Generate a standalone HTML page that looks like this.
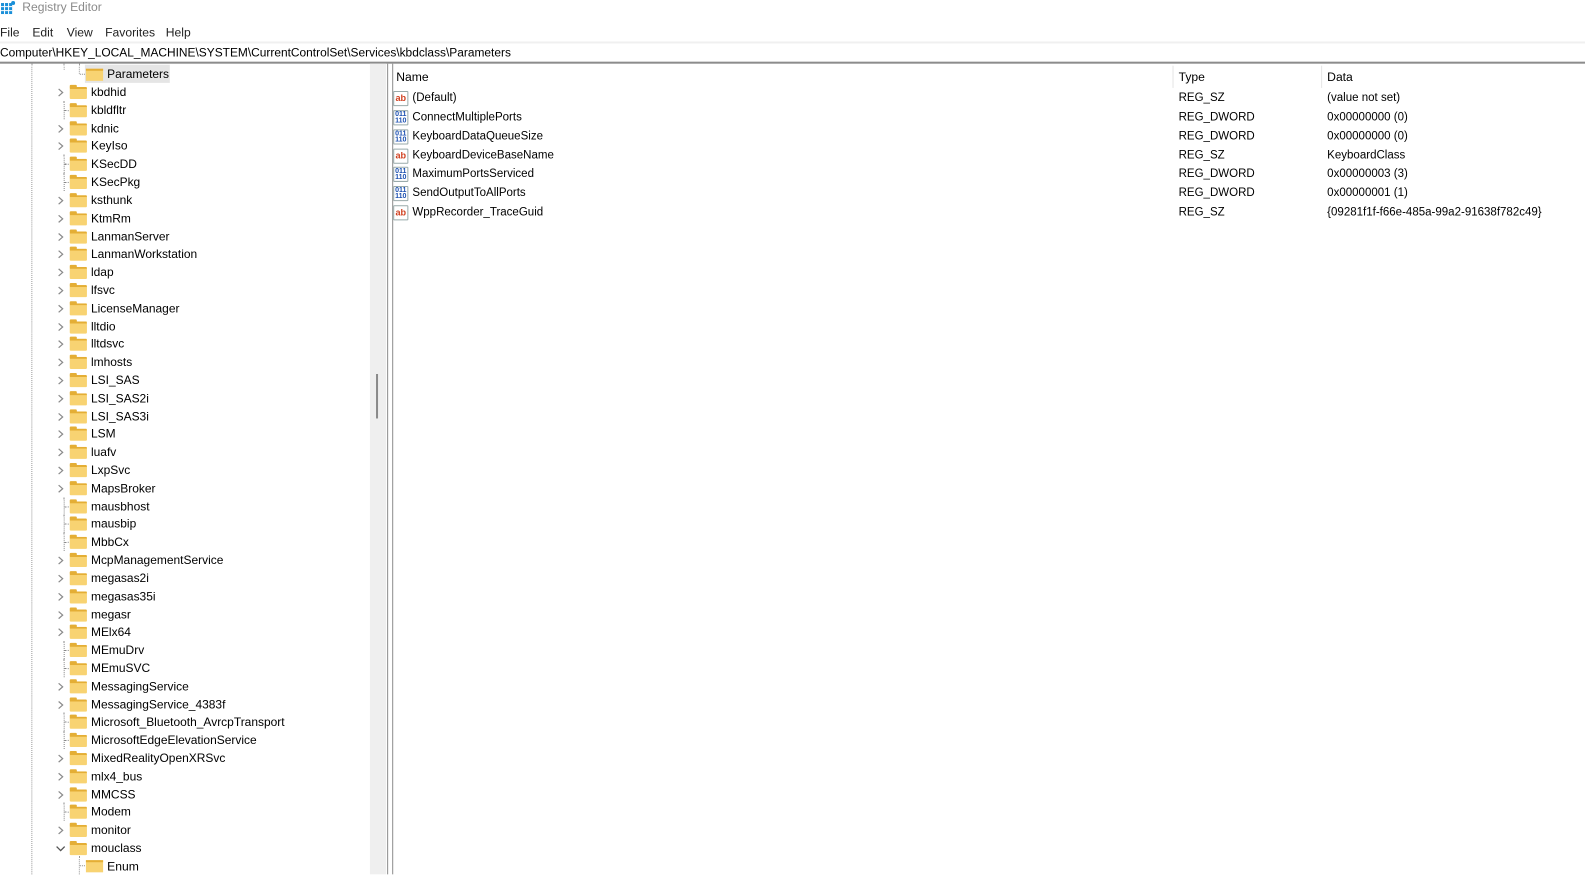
<!DOCTYPE html>
<html><head><meta charset="utf-8"><style>
*{margin:0;padding:0;box-sizing:border-box}
html,body{width:1585px;height:865px;overflow:hidden;background:#fff}
#w{position:absolute;left:0;top:0;width:1585px;height:865px;transform:scale(1.0108);transform-origin:0 0;font-family:"Segoe UI","Liberation Sans",sans-serif;font-size:12px;color:#000}
.abs{position:absolute}
.title{left:22px;top:0;font-size:12px;color:#8a8a8a;line-height:14px}
.menu{top:24px;line-height:16px;font-size:12px;color:#222}
.addr{left:0;top:44px;line-height:16px;font-size:11.8px}
.r{position:absolute;left:0;height:18px;width:362px;line-height:18px;font-size:11.85px}
.r .t{position:absolute;left:90px;top:0;white-space:nowrap}
.r .f{position:absolute;left:69px;top:4px;width:17px;height:12px;background:#f8d372;border-top:2px solid #e4ae35;border-radius:1px}
.r .f:before{content:"";position:absolute;left:0;top:-4px;width:7px;height:3px;background:#e4ae35;border-radius:1px 1px 0 0}
.r .c{position:absolute;left:56px;top:5px}
.r .d{position:absolute;left:63px;top:0;height:18px;border-left:1px dotted #888}
.r .h{position:absolute;left:64px;top:9px;width:4px;border-top:1px dotted #888}
.v{position:absolute;border-left:1px dotted #999}
.vr{position:absolute;left:392px;height:19px;line-height:19px;width:1190px;font-size:11.4px}
.vr span{position:absolute;top:0;white-space:nowrap}
.ic{position:absolute;left:-3px;top:2px;width:15px;height:15px;border:1px solid #9aa;border-radius:1px;background:#fff;font-size:9px;font-weight:bold;line-height:12px;text-align:center}
</style></head><body><div id="w">
<svg class="abs" style="left:1px;top:1px" width="14" height="13"><rect x="0" y="2" width="11" height="11" fill="#1a8fd8"/><g stroke="#fff" stroke-width="1"><line x1="3.5" y1="2" x2="3.5" y2="13"/><line x1="7.5" y1="2" x2="7.5" y2="13"/><line x1="0" y1="5.5" x2="11" y2="5.5"/><line x1="0" y1="9.5" x2="11" y2="9.5"/></g><circle cx="12" cy="2" r="2" fill="#1a8fd8"/></svg>
<div class="abs title">Registry Editor</div>
<div class="abs menu" style="left:0">File</div>
<div class="abs menu" style="left:32px">Edit</div>
<div class="abs menu" style="left:66px">View</div>
<div class="abs menu" style="left:104px">Favorites</div>
<div class="abs menu" style="left:164px">Help</div>
<div class="abs" style="left:0;top:41px;width:1585px;height:2px;background:#f0f0f0"></div>
<div class="abs addr">Computer\HKEY_LOCAL_MACHINE\SYSTEM\CurrentControlSet\Services\kbdclass\Parameters</div>
<div class="abs" style="left:0;top:61px;width:1585px;height:2px;background:#8c8c8c"></div>
<div class="v" style="left:31px;top:63px;height:802px"></div>
<div class="v" style="left:63px;top:63px;height:6px"></div>
<div class="abs" style="left:366px;top:63px;width:16px;height:802px;background:#efefef"></div>
<div class="abs" style="left:372px;top:370px;width:2px;height:44px;background:#8a8a8a"></div>
<div class="abs" style="left:383px;top:63px;width:1px;height:802px;background:#8c8c8c"></div>
<div class="abs" style="left:388px;top:63px;width:1px;height:802px;background:#8c8c8c"></div>
<div class="abs" style="left:84px;top:64px;width:84px;height:18px;background:#e5e5e5"></div>
<div class="v" style="left:78px;top:63px;height:10px"></div>
<div class="abs" style="left:79px;top:73px;width:5px;border-top:1px dotted #888"></div>
<div class="abs" style="left:85px;top:68px;width:17px;height:12px;background:#f8d372;border-top:2px solid #e4ae35"></div>
<div class="abs" style="left:106px;top:64px;line-height:18px;font-size:11.85px">Parameters</div>
<div id="tree"></div>
<div class="v" style="left:78px;top:847px;height:18px"></div>
<div class="abs" style="left:79px;top:856px;width:5px;border-top:1px dotted #888"></div>
<div class="abs" style="left:85px;top:851px;width:17px;height:12px;background:#f8d372;border-top:2px solid #e4ae35"></div>
<div class="abs" style="left:106px;top:848px;line-height:18px">Enum</div>
<div class="abs" style="left:392px;top:67px;line-height:18px">Name</div>
<div class="abs" style="left:1160px;top:65px;width:1px;height:22px;background:#e5e5e5"></div>
<div class="abs" style="left:1166px;top:67px;line-height:18px">Type</div>
<div class="abs" style="left:1307px;top:65px;width:1px;height:22px;background:#e5e5e5"></div>
<div class="abs" style="left:1313px;top:67px;line-height:18px">Data</div>
<div id="vals"></div>
</div>
<script>
var items=[["kbdhid",1],["kbldfltr",0],["kdnic",1],["KeyIso",1],["KSecDD",0],["KSecPkg",0],["ksthunk",1],["KtmRm",1],["LanmanServer",1],["LanmanWorkstation",1],["ldap",1],["lfsvc",1],["LicenseManager",1],["lltdio",1],["lltdsvc",1],["lmhosts",1],["LSI_SAS",1],["LSI_SAS2i",1],["LSI_SAS3i",1],["LSM",1],["luafv",1],["LxpSvc",1],["MapsBroker",1],["mausbhost",0],["mausbip",0],["MbbCx",0],["McpManagementService",1],["megasas2i",1],["megasas35i",1],["megasr",1],["MElx64",1],["MEmuDrv",0],["MEmuSVC",0],["MessagingService",1],["MessagingService_4383f",1],["Microsoft_Bluetooth_AvrcpTransport",0],["MicrosoftEdgeElevationService",0],["MixedRealityOpenXRSvc",1],["mlx4_bus",1],["MMCSS",1],["Modem",0],["monitor",1],["mouclass",2]];
var h="";
items.forEach(function(it,i){var top=82+17.81*i;
var m=it[1]==1?'<svg class="c" width="8" height="9"><path d="M2 1 L6 4.5 L2 8" fill="none" stroke="#8a8a8a" stroke-width="1.2"/></svg>':it[1]==2?'<svg class="c" style="left:55px;top:6px" width="10" height="7"><path d="M1 1.5 L5 5.5 L9 1.5" fill="none" stroke="#555" stroke-width="1.3"/></svg>':'<div class="d"></div><div class="h"></div>';
h+='<div class="r" style="top:'+top.toFixed(1)+'px">'+m+'<div class="f"></div><div class="t">'+it[0]+'</div></div>';});
document.getElementById("tree").innerHTML=h;
var v=[["ab","(Default)","REG_SZ","(value not set)"],["01","ConnectMultiplePorts","REG_DWORD","0x00000000 (0)"],["01","KeyboardDataQueueSize","REG_DWORD","0x00000000 (0)"],["ab","KeyboardDeviceBaseName","REG_SZ","KeyboardClass"],["01","MaximumPortsServiced","REG_DWORD","0x00000003 (3)"],["01","SendOutputToAllPorts","REG_DWORD","0x00000001 (1)"],["ab","WppRecorder_TraceGuid","REG_SZ","{09281f1f-f66e-485a-99a2-91638f782c49}"]];
h="";
v.forEach(function(x,i){var top=88+18.85*i;
var ic=x[0]=="ab"?'<div class="ic" style="color:#d04020">ab</div>':'<div class="ic" style="color:#1a4fb0;font-size:7px;line-height:6px;padding-top:1px">011<br>110</div>';
h+='<div class="vr" style="top:'+top.toFixed(1)+'px">'+ic+'<span style="left:16px">'+x[1]+'</span><span style="left:774px">'+x[2]+'</span><span style="left:921px">'+x[3]+'</span></div>';});
document.getElementById("vals").innerHTML=h;
</script>
</body></html>
